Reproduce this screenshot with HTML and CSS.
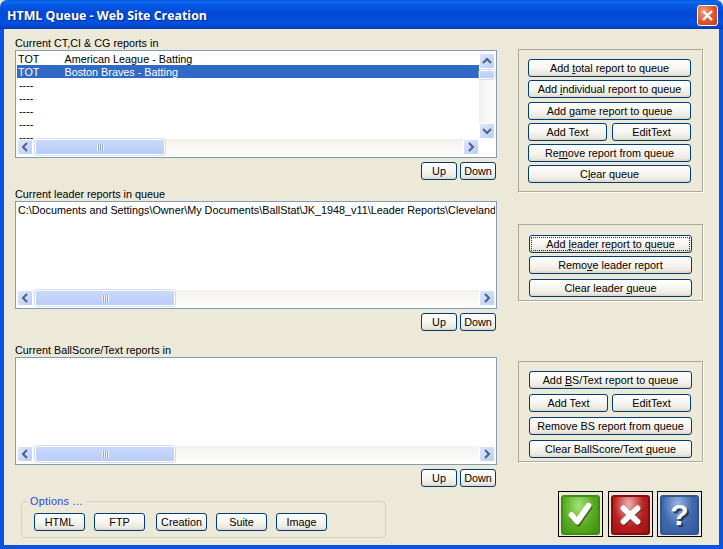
FILE: index.html
```html
<!DOCTYPE html>
<html lang="en">
<head>
<meta charset="utf-8">
<title>HTML Queue - Web Site Creation</title>
<link rel="stylesheet" href="styles.css">
</head>
<body>
<div class="window">
  <header class="titlebar">
    <span class="title">HTML Queue - Web Site Creation</span>
    <span class="close"><svg width="21" height="21" viewBox="0 0 21 21"><path d="M6 6l9 9M15 6l-9 9" stroke="#fff" stroke-width="2.4" fill="none"/></svg></span>
  </header>
  <main class="client">
    <div class="col-left">
      <section class="sec">
        <div class="label">Current CT,CI &amp; CG reports in</div>
        <div class="list list-both">
          <div class="rows">
            <div class="row"><span class="c1">TOT</span><span>American League - Batting</span></div>
            <div class="row sel"><span class="c1">TOT</span><span>Boston Braves - Batting</span></div>
            <div class="row dash">----</div>
            <div class="row dash">----</div>
            <div class="row dash">----</div>
            <div class="row dash">----</div>
            <div class="row dash last">----</div>
          </div>
          <div class="vbar">
            <span class="sb"><svg width="16" height="16" viewBox="0 0 16 16"><path d="M4 10l4-4 4 4" class="chev"/></svg></span>
            <span class="vthumb"></span>
            <span class="vspace"></span>
            <span class="sb"><svg width="16" height="16" viewBox="0 0 16 16"><path d="M4 6l4 4 4-4" class="chev"/></svg></span>
          </div>
          <div class="hbar">
            <span class="sb"><svg width="16" height="16" viewBox="0 0 16 16"><path d="M10 4l-4 4 4 4" class="chev"/></svg></span>
            <span class="hthumb t130"><i class="grip"></i></span>
            <span class="hspace"></span>
            <span class="sb"><svg width="16" height="16" viewBox="0 0 16 16"><path d="M6 4l4 4-4 4" class="chev"/></svg></span>
          </div>
        </div>
        <div class="updown"><button class="btn ud">Up</button><button class="btn ud">Down</button></div>
      </section>

      <section class="sec sec2">
        <div class="label">Current leader reports in queue</div>
        <div class="list list-h">
          <div class="rows path">C:\Documents and Settings\Owner\My Documents\BallStat\JK_1948_v11\Leader Reports\Cleveland</div>
          <div class="hbar">
            <span class="sb"><svg width="16" height="16" viewBox="0 0 16 16"><path d="M10 4l-4 4 4 4" class="chev"/></svg></span>
            <span class="hthumb t140"><i class="grip"></i></span>
            <span class="hspace"></span>
            <span class="sb"><svg width="16" height="16" viewBox="0 0 16 16"><path d="M6 4l4 4-4 4" class="chev"/></svg></span>
          </div>
        </div>
        <div class="updown"><button class="btn ud">Up</button><button class="btn ud">Down</button></div>
      </section>

      <section class="sec sec3">
        <div class="label">Current BallScore/Text reports in</div>
        <div class="list list-h">
          <div class="rows"></div>
          <div class="hbar">
            <span class="sb"><svg width="16" height="16" viewBox="0 0 16 16"><path d="M10 4l-4 4 4 4" class="chev"/></svg></span>
            <span class="hthumb t140"><i class="grip"></i></span>
            <span class="hspace"></span>
            <span class="sb"><svg width="16" height="16" viewBox="0 0 16 16"><path d="M6 4l4 4-4 4" class="chev"/></svg></span>
          </div>
        </div>
        <div class="updown"><button class="btn ud">Up</button><button class="btn ud">Down</button></div>
      </section>

      <fieldset class="options">
        <legend>Options ...</legend>
        <button class="btn opt">HTML</button>
        <button class="btn opt">FTP</button>
        <button class="btn opt">Creation</button>
        <button class="btn opt">Suite</button>
        <button class="btn opt">Image</button>
      </fieldset>
    </div>

    <div class="col-right">
      <section class="panel p1">
        <button class="btn wide">Add <u>t</u>otal report to queue</button>
        <button class="btn wide g3">Add <u>i</u>ndividual report to queue</button>
        <button class="btn wide g4">Add <u>g</u>ame report to queue</button>
        <div class="pair g3"><button class="btn half">Add Text</button><button class="btn half">EditText</button></div>
        <button class="btn wide g3">Re<u>m</u>ove report from queue</button>
        <button class="btn wide g3">C<u>l</u>ear queue</button>
      </section>
      <section class="panel p2">
        <button class="btn wide focus"><span class="fr">Add <u>l</u>eader report to queue</span></button>
        <button class="btn wide g3">Remo<u>v</u>e leader report</button>
        <button class="btn wide g5">Clear leader <u>q</u>ueue</button>
      </section>
      <section class="panel p3">
        <button class="btn wide">Add <u>B</u>S/Text report to queue</button>
        <div class="pair g5"><button class="btn half a">Add Text</button><button class="btn half b">EditText</button></div>
        <button class="btn wide g5">Remove BS report from queue</button>
        <button class="btn wide g5">Clear BallScore/Text <u>q</u>ueue</button>
      </section>
      <div class="actions">
        <button class="act"><span class="face green"><svg width="37" height="38" viewBox="0 0 37 38"><path d="M10 21l6 7 12-17" class="mark shade"/><path d="M9 19l6 7 12-17" class="mark"/></svg></span></button>
        <button class="act"><span class="face red"><svg width="37" height="38" viewBox="0 0 37 38"><path d="M12 13l15 14M27 13L12 27" class="mark shade"/><path d="M11 12l15 14M26 12L11 26" class="mark"/></svg></span></button>
        <button class="act"><span class="face blue">?</span></button>
      </div>
    </div>
  </main>
</div>
</body>
</html>
```

FILE: styles.css
```css
* { box-sizing: border-box; }
html, body { margin: 0; padding: 0; }
body { width: 723px; height: 549px; overflow: hidden; background: #ece9d8; font: 10.8px "Liberation Sans", Arial, sans-serif; color: #000; }
.window { width: 723px; height: 549px; display: flex; flex-direction: column; }

.titlebar {
  height: 29px; flex: none; display: flex; align-items: center; justify-content: space-between;
  padding: 2px 5px 0 7px; border-radius: 7px 7px 0 0;
  background: linear-gradient(#0a56d8 0, #0a6cf0 2px, #0458e4 5px, #0249d6 14px, #0252e2 22px, #0244c8 27px, #0238b4 29px);
}
.title { color: #fff; font: bold 12.4px "Open Sans", "Liberation Sans", sans-serif; text-shadow: 1px 1px 1px #0a2a8a; }
.close {
  width: 21px; height: 21px; border: 1px solid #fff; border-radius: 3px; display: block;
  background: radial-gradient(circle at 30% 30%, #f0a080, #e0552c 55%, #c23a14);
}
.close svg { display: block; margin: -1px; }

.client {
  flex: 1; display: grid; grid-template-columns: 482px 185px; column-gap: 21px; align-items: start;
  padding: 7px 0 0 11px; background: #ece9d8;
  border: solid #0a52e0; border-width: 0 4px 4px;
}

.label { height: 14px; line-height: 14px; white-space: nowrap; }
.sec2 { margin-top: 7px; }
.sec3 { margin-top: 12px; }

.list { height: 108px; border: 1px solid #7f9db9; background: #fff; padding: 1px 1px 2px; display: grid; }
.list-both { grid-template-columns: 462px 16px; grid-template-rows: 87px 16px; }
.list-h { grid-template-rows: 87px 16px; }
.rows { overflow: hidden; min-width: 0; }
.list-h .rows { padding-left: 1px; }
.path { line-height: 13px; padding-top: 1px; white-space: nowrap; }
.row { height: 13px; line-height: 14px; padding-left: 1px; display: flex; white-space: nowrap; }
.row .c1 { width: 46.5px; }
.sel { background: #316ac5; color: #fff; }
.dash { padding-left: 2px; }
.last { height: 9px; overflow: hidden; }

.vbar, .hbar { display: flex; background: linear-gradient(90deg, #f3f1ec, #fdfdfb); }
.vbar { flex-direction: column; grid-row: 1; grid-column: 2; padding-top: 1px; }
.hbar { background: linear-gradient(#f3f1ec, #fdfdfb); grid-column: 1; }
.list-h .hbar { grid-column: 1; }
.sb {
  width: 16px; height: 16px; flex: none; display: block; border: 1px solid #fff; border-radius: 2px;
  background: linear-gradient(135deg, #dce7fd, #bccdf7);
}
.sb svg { display: block; margin: -1px; }
.chev { fill: none; stroke: #4d6185; stroke-width: 2; }
.hthumb, .vthumb {
  display: flex; align-items: center; justify-content: center; flex: none;
  border: 1px solid #fff; border-radius: 2px; background: linear-gradient(#c9d8fc, #b9cdf8);
  box-shadow: 0 0 0 0.5px #a9bfee;
}
.hthumb { height: 16px; margin-left: 2px; }
.t130 { width: 130px; }
.t140 { width: 140px; }
.vthumb { width: 16px; height: 9px; margin-top: 1px; }
.vspace, .hspace { flex: 1; }
.grip { width: 7px; height: 7px; background: repeating-linear-gradient(90deg, #eef3ff 0 1px, #8fa8dc 1px 2px); }

.updown { display: flex; justify-content: flex-end; gap: 3px; margin-top: 4px; padding-right: 1px; }

.btn {
  display: block; height: 18px; padding: 0; border: 1px solid #003c74; border-radius: 3px;
  font: inherit; color: #000; line-height: 15px; white-space: nowrap; text-align: center;
  background: linear-gradient(#fff, #f6f5f0 50%, #ebe8de 85%, #d9d4c6);
}
.ud { width: 36px; }
.wide { width: 163px; }

.options { margin: 7px 0 0 6px; width: 365px; height: 44px; padding: 5px 0 0 12px; border: 1px solid #d0d0bf; border-radius: 4px; display: block; }
.options legend { padding: 0 3px; margin-left: -7px; line-height: 14px; color: #2a45e0; letter-spacing: .3px; }
.opt { width: 51px; float: left; margin-right: 9px; }
.opt:nth-of-type(2) { margin-right: 11px; }

.panel { width: 185px; border: 1px solid #aca899; box-shadow: 1px 1px 0 #fff; }
.p1 { margin-top: 13px; height: 143px; padding: 9px 0 0 9px; }
.p2 { margin-top: 32px; height: 77px; padding: 10px 0 0 10px; }
.p3 { margin-top: 60px; height: 101px; padding: 9px 0 0 10px; }
.g3 { margin-top: 3px; }
.g4 { margin-top: 4px; }
.g5 { margin-top: 5px; }
.pair { display: flex; gap: 5px; width: 163px; }
.half { width: 79px; }
.half.a { width: 79px; }
.half.b { width: 79px; margin-left: -1px; }
.focus { padding: 1px; }
.fr { display: block; height: 14px; line-height: 13px; border: 1px dotted #333; }

.actions { display: flex; margin: 29px 0 0 40px; gap: 5px; }
.act { width: 45px; height: 46px; padding: 2px 0 0 2px; border: 1px solid #000; background: #ece9d8; display: block; flex: none; }
.act:last-child { margin-left: -1px; }
.face { display: flex; align-items: center; justify-content: center; width: 39px; height: 40px; border-radius: 3px; }
.face svg { display: block; }
.green { background: radial-gradient(ellipse at 45% 25%, #a4e07c, #5aab22 55%, #3d920c); border: 2px solid #3c8f12; }
.red { background: radial-gradient(ellipse at 45% 20%, #eeb0b0, #b62020 55%, #9c1212); border: 2px solid #8e0a0a; }
.blue { background: radial-gradient(ellipse at 45% 20%, #9ab6e0, #4068ae 55%, #33589c); border: 2px solid #31568f; color: #fff; font: bold 30px "Liberation Sans", sans-serif; text-shadow: 2px 2px 1px #22345c; }
.mark { fill: none; stroke: #fff; stroke-width: 6; stroke-linecap: round; stroke-linejoin: round; }
.shade { stroke: #1c2a10; opacity: .55; }
```
